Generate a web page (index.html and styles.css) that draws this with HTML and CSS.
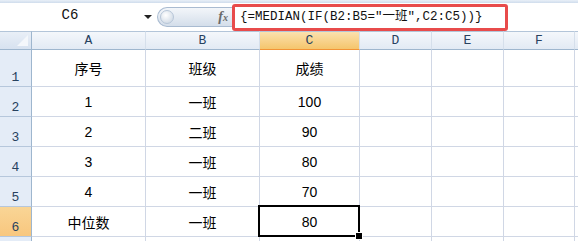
FILE: index.html
```html
<!DOCTYPE html>
<html lang="zh-CN">
<head>
    <meta charset="UTF-8">
    <title>MEDIAN</title>
    <link rel="stylesheet" href="styles.css">
</head>
<body>
    <div class="ribbon-edge"></div>

    <!-- formula bar -->
    <div class="formula-bar">
        <div class="name-box">C6</div>
        <div class="name-drop"></div>
        <div class="fx-pill">
            <span class="pill-knob"></span>
            <span class="fx"><i>f</i><small>x</small></span>
        </div>
        <div class="formula-input">{=MEDIAN(IF(B2:B5="一班",C2:C5))}</div>
        <div class="formula-rest"></div>
    </div>

    <!-- sheet -->
    <div class="sheet">
        <div class="corner"><span class="corner-tri"></span></div>
        <div class="col-head">A</div>
        <div class="col-head">B</div>
        <div class="col-head active">C</div>
        <div class="col-head">D</div>
        <div class="col-head">E</div>
        <div class="col-head">F</div>
        <div class="col-head edge"></div>

        <div class="row-head">1</div>
        <div class="cell">序号</div>
        <div class="cell">班级</div>
        <div class="cell">成绩</div>
        <div class="cell"></div><div class="cell"></div><div class="cell"></div><div class="cell edge"></div>

        <div class="row-head">2</div>
        <div class="cell">1</div>
        <div class="cell">一班</div>
        <div class="cell">100</div>
        <div class="cell"></div><div class="cell"></div><div class="cell"></div><div class="cell edge"></div>

        <div class="row-head">3</div>
        <div class="cell">2</div>
        <div class="cell">二班</div>
        <div class="cell">90</div>
        <div class="cell"></div><div class="cell"></div><div class="cell"></div><div class="cell edge"></div>

        <div class="row-head">4</div>
        <div class="cell">3</div>
        <div class="cell">一班</div>
        <div class="cell">80</div>
        <div class="cell"></div><div class="cell"></div><div class="cell"></div><div class="cell edge"></div>

        <div class="row-head">5</div>
        <div class="cell">4</div>
        <div class="cell">一班</div>
        <div class="cell">70</div>
        <div class="cell"></div><div class="cell"></div><div class="cell"></div><div class="cell edge"></div>

        <div class="row-head active">6</div>
        <div class="cell">中位数</div>
        <div class="cell">一班</div>
        <div class="cell selected">80</div>
        <div class="cell"></div><div class="cell"></div><div class="cell"></div><div class="cell edge"></div>

        <div class="row-head"></div>
        <div class="cell"></div><div class="cell"></div><div class="cell"></div>
        <div class="cell"></div><div class="cell"></div><div class="cell"></div><div class="cell edge"></div>
    </div>
</body>
</html>
```

FILE: styles.css
```css
* {
    margin: 0;
    padding: 0;
    box-sizing: border-box;
}
body {
    width: 578px;
    height: 241px;
    overflow: hidden;
    background-color: #fff;
    font-family: "Liberation Sans", "Noto Sans CJK SC", sans-serif;
}
.ribbon-edge {
    height: 3px;
    background: linear-gradient(#e9f0f8, #cfdcec);
}

/* Formula bar */
.formula-bar {
    display: flex;
    height: 28px;
    background-color: #fff;
}
.name-box {
    width: 140px;
    padding-top: 4px;
    text-align: center;
    font-family: "Liberation Mono", monospace;
    font-size: 14px;
    color: #111;
}
.name-drop {
    width: 17px;
    position: relative;
}
.name-drop::after {
    content: "";
    position: absolute;
    left: 4px;
    top: 12px;
    border-left: 4px solid transparent;
    border-right: 4px solid transparent;
    border-top: 4px solid #222;
}
.fx-pill {
    width: 75px;
    height: 20px;
    margin-top: 4px;
    display: flex;
    align-items: center;
    justify-content: space-between;
    border: 1px solid #a9bbd1;
    border-right: none;
    border-radius: 10px 0 0 10px;
    background: linear-gradient(#f3f6fa, #d4deea);
}
.pill-knob {
    width: 14px;
    height: 14px;
    margin-left: 2px;
    border-radius: 50%;
    background: radial-gradient(circle at 40% 35%, #ffffff, #c6d2e0);
    border: 1px solid #b7c6d8;
}
.fx {
    margin-right: 4px;
    font-family: "Liberation Serif", serif;
    font-size: 14px;
    font-weight: bold;
    color: #6a6a6a;
}
.fx small {
    font-size: 10px;
    font-style: italic;
}
.formula-input {
    position: relative;
    z-index: 1;
    width: 276px;
    height: 27px;
    margin-top: 1px;
    padding: 2px 0 0 5px;
    border: 3px solid #e84b4b;
    border-radius: 3px;
    background-color: #fff;
    font-family: "Liberation Mono", "Noto Sans CJK SC", monospace;
    font-size: 12.5px;
    line-height: 17px;
    color: #111;
    white-space: nowrap;
}
.formula-rest {
    flex: 1;
}

/* Sheet grid */
.sheet {
    display: grid;
    grid-template-columns: 32px 114px 114px 100px 72px 72px 71px 3px;
    grid-template-rows: 19px 37px 30px 30px 30px 30px 30px 10px;
}
.corner,
.col-head,
.row-head {
    border-right: 1px solid #9eb6ce;
    border-bottom: 1px solid #9eb6ce;
    color: #27415f;
    font-family: "Liberation Mono", monospace;
    font-size: 13px;
}
.corner {
    position: relative;
    background: linear-gradient(#e9eff7, #d7e2f0);
    border-top: 1px solid #b3c5d9;
}
.corner-tri {
    position: absolute;
    right: 3px;
    bottom: 3px;
    border-left: 11px solid transparent;
    border-bottom: 11px solid #f4f7fb;
}
.col-head {
    border-top: 1px solid #b3c5d9;
    border-right-color: #d5dfeb;
    background: linear-gradient(#f4f7fb, #e2eaf4);
    text-align: center;
    line-height: 17px;
}
.col-head.active {
    background: linear-gradient(#fbe1ae, #f5c56c);
    border-bottom-color: #f29436;
}
.row-head {
    display: flex;
    align-items: flex-end;
    justify-content: center;
    padding-bottom: 1px;
    background-color: #e4ecf7;
    border-bottom-color: #b6c7dc;
}
.row-head.active {
    background: linear-gradient(#f9d596, #f8c77e);
}
.cell {
    display: flex;
    align-items: center;
    justify-content: center;
    border-right: 1px solid #d0d7e5;
    border-bottom: 1px solid #d0d7e5;
    font-size: 14px;
    color: #000;
}
.edge {
    border-right: none;
}
.cell.selected {
    position: relative;
}
.cell.selected::before {
    content: "";
    position: absolute;
    left: -2px;
    top: -2px;
    right: -1px;
    bottom: -1px;
    border: 2px solid #000;
}
.cell.selected::after {
    content: "";
    position: absolute;
    right: -4px;
    bottom: -4px;
    width: 6px;
    height: 6px;
    background-color: #000;
    border: 1px solid #fff;
}
```
